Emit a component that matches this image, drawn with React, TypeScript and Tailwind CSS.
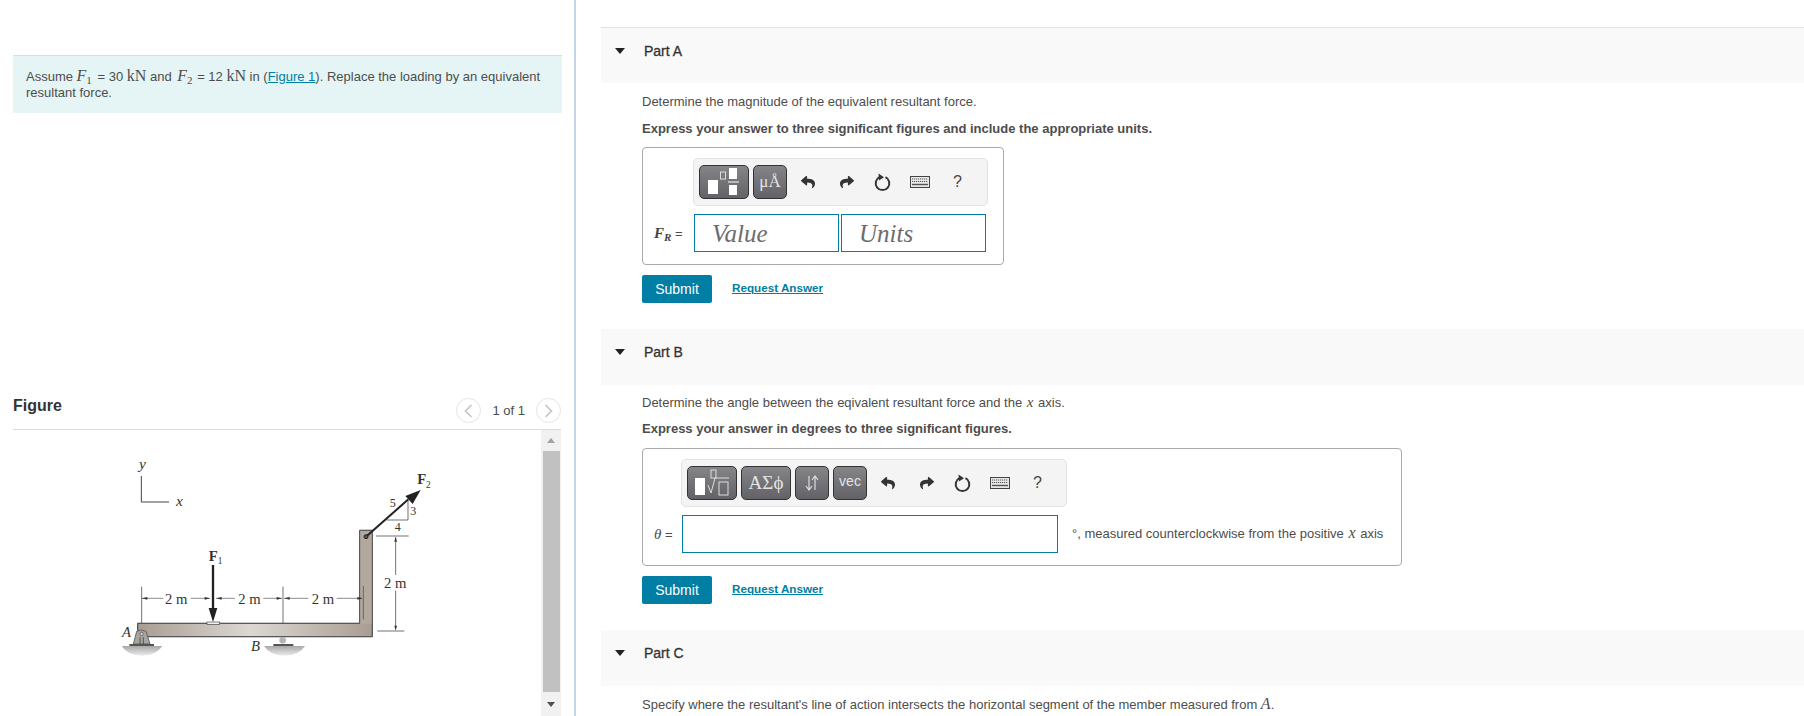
import { FaReply, FaShare } from "react-icons/fa";

const math = "font-['Liberation_Serif',serif]";

function ResetIcon() {
  return (
    <svg width="17" height="19" viewBox="0 0 17 19" fill="none">
      <path d="M11.5 4.2A6.8 6.8 0 1 1 5.5 4.2" stroke="#333" strokeWidth="2" />
      <path d="M4.5 0.5 L10 4.2 L5 7.5 Z" fill="#333" />
    </svg>
  );
}

function KeyboardIcon() {
  return (
    <svg width="20" height="12" viewBox="0 0 20 12">
      <rect x="0.5" y="0.5" width="19" height="11" fill="#e8e8e8" stroke="#444" />
      <path d="M2 3h16M2 5.5h16" stroke="#555" strokeWidth="1.2" strokeDasharray="1.2 0.8" />
      <path d="M2 8.5h16" stroke="#555" strokeWidth="1.4" />
    </svg>
  );
}

function ToolButton({ className, children }: { className: string; children: React.ReactNode }) {
  return (
    <div
      className={`flex h-[34px] shrink-0 items-center justify-center rounded-[5px] border border-[#333] bg-gradient-to-b from-[#858589] to-[#636367] text-[#e4e4e4] ${className}`}
    >
      {children}
    </div>
  );
}

function ToolActions() {
  return (
    <div className="ml-[14px] flex items-center text-[#333]">
      <FaReply size={14} />
      <FaShare size={14} className="ml-[25px]" />
      <span className="ml-[20px]">
        <ResetIcon />
      </span>
      <span className="ml-[19px]">
        <KeyboardIcon />
      </span>
      <span className="ml-[23px] text-[16px] leading-none text-[#444]">?</span>
    </div>
  );
}

function PartHeader({ name, line }: { name: string; line?: boolean }) {
  return (
    <div className={`flex h-[56px] items-start bg-[#f9f9f9] pt-[15px] ${line ? "border-t border-[#e2e2e2]" : ""}`}>
      <span className="ml-[14px] mt-[5px] h-0 w-0 border-x-[5px] border-t-[6px] border-x-transparent border-t-[#222]" />
      <span className="ml-[19px] text-[14px] leading-[16px] text-[#333] [-webkit-text-stroke:0.3px_#333]">{name}</span>
    </div>
  );
}

function SubmitRow() {
  return (
    <div className="ml-[41px] mt-[10px] flex items-center">
      <button className="h-[28px] w-[70px] rounded-[2px] bg-[#007ea3] text-[14px] font-medium text-white">Submit</button>
      <a className="mb-[2px] ml-[20px] text-[11.7px] font-bold text-[#007ea3] underline">Request Answer</a>
    </div>
  );
}

function Figure() {
  const serif = "Liberation Serif, serif";
  return (
    <svg width="340" height="276" viewBox="0 0 1020 828" className="shrink-0">
      <defs>
        <linearGradient id="beam" x1="0" x2="1" y1="0" y2="0">
          <stop offset="0" stopColor="#a89d92" />
          <stop offset="0.48" stopColor="#dbd8d2" />
          <stop offset="1" stopColor="#a89d92" />
        </linearGradient>
        <linearGradient id="ground" x1="0" x2="0" y1="0" y2="1">
          <stop offset="0" stopColor="#a8a8a8" />
          <stop offset="1" stopColor="#ececec" />
        </linearGradient>
      </defs>
      <path d="M124 108V186H207" fill="none" stroke="#444" strokeWidth="3" />
      <text x="117" y="86" fontFamily={serif} fontStyle="italic" fontSize="46" fill="#333">y</text>
      <text x="228" y="199" fontFamily={serif} fontStyle="italic" fontSize="46" fill="#333">x</text>

      <path d="M113 550H779V271H817V590H113Z" fill="url(#beam)" stroke="#555" strokeWidth="3" />
      <rect x="779" y="271" width="38" height="280" fill="#b3a89e" />
      <path d="M779 550V271H817V590H113V550H779" fill="none" stroke="#555" strokeWidth="3" />

      <path d="M125 440V550M549 440V550M790 438V538" stroke="#555" strokeWidth="2.5" fill="none" />
      <path d="M125 475H190M272 475H330M348 475H405M490 475H546M552 475H625M710 475H786" stroke="#555" strokeWidth="2" fill="none" />
      <path d="M126 475l16-4v8zM330 475l-16-4v8zM349 475l16-4v8zM546 475l-16-4v8zM553 475l16-4v8zM788 475l-16-4v8z" fill="#333" />
      <text x="195" y="492" fontFamily={serif} fontSize="44" fill="#333">2 m</text>
      <text x="415" y="492" fontFamily={serif} fontSize="44" fill="#333">2 m</text>
      <text x="635" y="492" fontFamily={serif} fontSize="44" fill="#333">2 m</text>

      <path d="M339 375V512" stroke="#222" strokeWidth="7" />
      <path d="M326 504H352L339 546Z" fill="#222" />
      <rect x="321" y="546" width="38" height="7" fill="#f2f2f2" stroke="#444" strokeWidth="2" />
      <text x="326" y="362" fontFamily={serif} fontWeight="bold" fontSize="44" fill="#333">F</text>
      <text x="353" y="372" fontFamily={serif} fontSize="28" fill="#333">1</text>

      <path d="M860 240H924V182" fill="none" stroke="#555" strokeWidth="2.5" />
      <path d="M798 290L925 178" stroke="#222" strokeWidth="6" />
      <path d="M962 150L916 168L938 192Z" fill="#222" />
      <circle cx="798" cy="290" r="6" fill="#555" stroke="#222" strokeWidth="3" />
      <text x="869" y="201" fontFamily={serif} fontSize="36" fill="#333">5</text>
      <text x="931" y="226" fontFamily={serif} fontSize="36" fill="#333">3</text>
      <text x="884" y="272" fontFamily={serif} fontSize="36" fill="#333">4</text>
      <text x="952" y="131" fontFamily={serif} fontWeight="bold" fontSize="44" fill="#333">F</text>
      <text x="978" y="145" fontFamily={serif} fontSize="28" fill="#333">2</text>

      <path d="M828 288H926M832 573H913M887 292V405M887 452V565" stroke="#555" strokeWidth="2.5" fill="none" />
      <path d="M887 290l-4 15h8zM887 572l-4-15h8z" fill="#333" />
      <text x="852" y="443" fontFamily={serif} fontSize="44" fill="#333">2 m</text>

      <path d="M65 618H187Q170 646 126 647Q82 646 65 618Z" fill="url(#ground)" />
      <path d="M100 612L110 574Q124 566 138 574L150 612Z" fill="#a9a49d" stroke="#555" strokeWidth="2.5" />
      <path d="M88 612H162V618H88Z" fill="#555" />
      <circle cx="125" cy="582" r="5" fill="#ddd" stroke="#444" strokeWidth="2" />
      <path d="M120 592V612M130 592V612" stroke="#444" strokeWidth="2.5" />
      <text x="66" y="591" fontFamily={serif} fontStyle="italic" fontSize="44" fill="#333">A</text>

      <path d="M492 618H615Q598 646 553 647Q509 646 492 618Z" fill="url(#ground)" />
      <path d="M520 612H580V618H520Z" fill="#555" />
      <circle cx="548" cy="601" r="10" fill="#b5b5b5" />
      <text x="453" y="633" fontFamily={serif} fontStyle="italic" fontSize="44" fill="#333">B</text>
    </svg>
  );
}

function Scrollbar() {
  return (
    <div className="flex w-[20px] shrink-0 flex-col items-center bg-[#f1f1f1]">
      <div className="flex h-[21px] w-full items-center justify-center">
        <span className="h-0 w-0 border-x-[4px] border-b-[5px] border-x-transparent border-b-[#a3a3a3]" />
      </div>
      <div className="w-[17px] flex-1 bg-[#c1c1c1]" />
      <div className="flex h-[24px] w-full items-center justify-center">
        <span className="h-0 w-0 border-x-[4px] border-t-[5px] border-x-transparent border-t-[#505050]" />
      </div>
    </div>
  );
}

function NavButton({ dir }: { dir: "left" | "right" }) {
  return (
    <span className="flex h-[25px] w-[25px] items-center justify-center rounded-full border border-[#e5e5e5]">
      <svg width="9" height="14" viewBox="0 0 9 14" fill="none">
        <path d={dir === "left" ? "M7.5 1L1.5 7L7.5 13" : "M1.5 1L7.5 7L1.5 13"} stroke="#c4c4c4" strokeWidth="1.6" />
      </svg>
    </span>
  );
}

export default function App() {
  return (
    <div className="flex h-[716px] w-[1804px] overflow-hidden bg-white font-['Liberation_Sans',Arial,sans-serif] text-[#4d4d4d]">
      <div className="flex w-[576px] shrink-0 flex-col border-r-2 border-[#c3d4e6] pl-[13px] pr-[13px]">
        <div className="mt-[55px] h-[58px] w-[549px] border-t border-[#dcdcdc] bg-[#e5f5f6] px-[13px] pt-[12px] text-[13px] leading-[16px]">
          Assume <i className={`${math} text-[16px]`}>F</i><sub className={`${math} mr-[2px] text-[11px]`}>1</sub> = 30{" "}
          <span className={`${math} text-[16px]`}>kN</span> and <i className={`${math} ml-[2px] text-[16px]`}>F</i>
          <sub className={`${math} mr-[1px] text-[11px]`}>2</sub> = 12 <span className={`${math} text-[16px]`}>kN</span> in (
          <a className="text-[#007ea3] underline">Figure 1</a>). Replace the loading by an equivalent
          <br />
          resultant force.
        </div>

        <div className="mt-[278px] flex h-[39px] w-[548px] items-start border-b border-[#dcdcdc]">
          <span className="mt-[6px] text-[16px] font-bold leading-[18px] text-[#333]">Figure</span>
          <div className="ml-auto mt-[7px] flex items-center">
            <NavButton dir="left" />
            <span className="mx-[11px] text-[13px] text-[#4d4d4d]">1 of 1</span>
            <NavButton dir="right" />
          </div>
        </div>

        <div className="flex h-[286px] w-[548px]">
          <div className="flex-1 overflow-hidden pl-[87px] pt-[10px]">
            <Figure />
          </div>
          <Scrollbar />
        </div>
      </div>

      <div className="ml-[25px] flex-1 pt-[27px]">
        <PartHeader name="Part A" line />
        <p className="ml-[41px] mt-[11px] text-[13px] leading-[16px]">Determine the magnitude of the equivalent resultant force.</p>
        <p className="ml-[41px] mt-[11px] text-[13px] font-bold leading-[16px]">Express your answer to three significant figures and include the appropriate units.</p>
        <div className="ml-[41px] mt-[10px] h-[118px] w-[362px] rounded-[4px] border border-[#aaa] pt-[10px]">
          <div className="ml-[50px] flex h-[48px] w-[295px] items-center rounded-[5px] border border-[#e2e2e2] bg-[#f4f4f4] pl-[5px]">
            <ToolButton className="w-[50px]">
              <svg width="34" height="30" viewBox="0 0 34 30">
                <rect x="1" y="13" width="10" height="14" fill="#fff" />
                <rect x="13.5" y="5" width="5" height="7" fill="none" stroke="#ddd" />
                <rect x="22" y="1" width="8" height="11" fill="#fff" />
                <path d="M21 15H32" stroke="#fff" />
                <rect x="22" y="18" width="8" height="10" fill="#fff" />
              </svg>
            </ToolButton>
            <ToolButton className={`ml-[4px] w-[34px] ${math} text-[17px]`}>μÅ</ToolButton>
            <ToolActions />
          </div>
          <div className="mt-[8px] flex items-center">
            <span className={`ml-[11px] w-[40px] text-[15px] italic ${math}`}>
              <span className="font-bold text-[#444]">F<sub className="text-[11px]">R</sub></span>
              <span className="not-italic font-['Liberation_Sans',sans-serif] text-[13px]"> =</span>
            </span>
            <div className={`flex h-[38px] w-[145px] items-center border border-[#007ea3] pl-[17px] pt-[2px] text-[25px] italic text-[#6d6d6d] ${math}`}>Value</div>
            <div className={`ml-[2px] flex h-[38px] w-[145px] items-center border border-[#007ea3] pl-[17px] pt-[2px] text-[25px] italic text-[#6d6d6d] ${math}`}>Units</div>
          </div>
        </div>
        <SubmitRow />

        <div className="mt-[26px]">
          <PartHeader name="Part B" />
        </div>
        <p className="ml-[41px] mt-[10px] text-[13px] leading-[16px]">
          Determine the angle between the eqivalent resultant force and the <i className={`${math} mx-[1px] text-[15px] leading-none`}>x</i> axis.
        </p>
        <p className="ml-[41px] mt-[10px] text-[13px] font-bold leading-[16px]">Express your answer in degrees to three significant figures.</p>
        <div className="ml-[41px] mt-[11px] h-[118px] w-[760px] rounded-[4px] border border-[#aaa] pt-[10px]">
          <div className="ml-[38px] flex h-[48px] w-[386px] items-center rounded-[5px] border border-[#e2e2e2] bg-[#f4f4f4] pl-[5px]">
            <ToolButton className="w-[50px]">
              <svg width="40" height="30" viewBox="0 0 40 30">
                <rect x="3" y="10" width="10" height="17" fill="#fff" />
                <rect x="19" y="2" width="5" height="8" fill="none" stroke="#ddd" />
                <path d="M16 17l3 8 4-15H37" fill="none" stroke="#ddd" />
                <rect x="27" y="14" width="9" height="13" fill="none" stroke="#ddd" />
              </svg>
            </ToolButton>
            <ToolButton className={`ml-[4px] w-[50px] ${math} text-[19px]`}>ΑΣϕ</ToolButton>
            <ToolButton className="ml-[4px] w-[34px]">
              <svg width="14" height="16" viewBox="0 0 14 16" fill="none" stroke="#ddd" strokeWidth="1.2">
                <path d="M4 1V14M1 11l3 4 3-4" />
                <path d="M10 15V2M7 5l3-4 3 4" />
              </svg>
            </ToolButton>
            <ToolButton className="ml-[4px] w-[34px] pb-[3px] text-[14px]">vec</ToolButton>
            <ToolActions />
          </div>
          <div className="mt-[8px] flex items-center">
            <span className={`ml-[11px] w-[28px] text-[15px] italic ${math}`}>
              θ<span className="not-italic font-['Liberation_Sans',sans-serif] text-[13px]"> =</span>
            </span>
            <div className="h-[38px] w-[376px] border border-[#007ea3]" />
            <span className="ml-[14px] text-[13px]">
              °, measured counterclockwise from the positive <i className={`${math} mx-[1px] text-[16px] leading-none`}>x</i> axis
            </span>
          </div>
        </div>
        <SubmitRow />

        <div className="mt-[26px]">
          <PartHeader name="Part C" />
        </div>
        <p className="ml-[41px] mt-[10px] text-[13px] leading-[16px]">
          Specify where the resultant's line of action intersects the horizontal segment of the member measured from <i className={`${math} text-[16px] leading-none`}>A</i>.
        </p>
      </div>
    </div>
  );
}
